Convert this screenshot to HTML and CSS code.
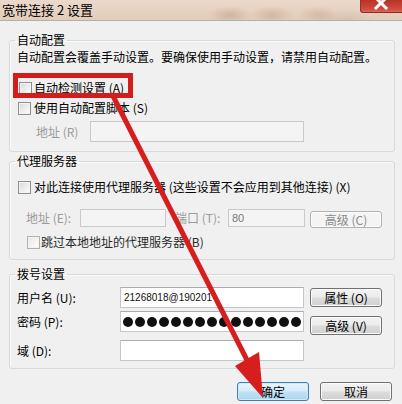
FILE: index.html
```html
<!DOCTYPE html>
<html lang="zh-CN">
<head>
<meta charset="utf-8">
<title>宽带连接 2 设置</title>
<link rel="stylesheet" href="styles.css">
</head>
<body>
<div class="window">
  <div class="titlebar">
    <span class="title">宽带连接 2 设置</span>
    <span class="close">
      <svg width="42" height="13" viewBox="0 0 42 13"><path d="M16 -2 L26 8 M26 -2 L16 8" stroke="#fff" stroke-width="3" stroke-linecap="square"/></svg>
    </span>
  </div>
  <div class="content">
    <fieldset class="group g1">
      <legend>自动配置</legend>
      <p class="desc">自动配置会覆盖手动设置。要确保使用手动设置，请禁用自动配置。</p>
      <div class="check c1"><span class="box"></span><span>自动检测设置 (A)</span></div>
      <div class="check c2"><span class="box"></span><span>使用自动配置脚本 (S)</span></div>
      <div class="row r-script">
        <span class="lbl dis lbl-script">地址 (R)</span>
        <span class="input dis in-script"></span>
      </div>
    </fieldset>

    <fieldset class="group g2">
      <legend>代理服务器</legend>
      <div class="check c3"><span class="box"></span><span>对此连接使用代理服务器 (这些设置不会应用到其他连接) (X)</span></div>
      <div class="row r-proxy">
        <span class="lbl dis lbl-addr">地址 (E):</span>
        <span class="input dis in-addr"></span>
        <span class="lbl dis lbl-port">端口 (T):</span>
        <span class="input dis in-port"><span class="val">80</span></span>
        <span class="btn btn-dis btn-c">高级 (C)</span>
      </div>
      <div class="check c4"><span class="box box-dis"></span><span>跳过本地地址的代理服务器 (B)</span></div>
    </fieldset>

    <fieldset class="group g3">
      <legend>拨号设置</legend>
      <div class="row r-dial r-user">
        <span class="lbl lbl-dial">用户名 (U):</span>
        <span class="input in-dial"><span class="val user">21268018@190201</span></span>
        <span class="btn btn-prop">属性 (O)</span>
      </div>
      <div class="row r-dial r-pass">
        <span class="lbl lbl-dial">密码 (P):</span>
        <span class="input in-dial dots">
          <i></i><i></i><i></i><i></i><i></i><i></i><i></i><i></i><i></i><i></i><i></i><i></i><i></i><i></i><i></i>
        </span>
        <span class="btn btn-adv">高级 (V)</span>
      </div>
      <div class="row r-dial r-domain">
        <span class="lbl lbl-dial">域 (D):</span>
        <span class="input in-dial"></span>
      </div>
    </fieldset>

    <div class="footer">
      <span class="btn btn-default">确定</span>
      <span class="btn">取消</span>
    </div>
  </div>

  <svg class="annot" width="402" height="404" viewBox="0 0 402 404">
    <rect x="15.5" y="75.5" width="115" height="20" fill="none" stroke="#d31c1c" stroke-width="5"/>
    <line x1="113" y1="96" x2="249" y2="364" stroke="#d61e1e" stroke-width="5" stroke-linecap="round"/>
    <polygon points="263,398 235,366 259,352" fill="#d61e1e"/>
  </svg>
</div>
</body>
</html>
```

FILE: styles.css
```css
html, body {
  margin: 0;
  padding: 0;
}

body {
  width: 402px;
  height: 404px;
  overflow: hidden;
  background: #f0f0f0;
  font-family: "Noto Sans CJK SC", "Liberation Sans", sans-serif;
  font-size: 12px;
  line-height: 16px;
  color: #111;
}

.window {
  position: relative;
  width: 402px;
  height: 404px;
  background: #f0f0f0;
}

.titlebar {
  height: 20px;
  border-bottom: 1px solid #b4b0ab;
  display: flex;
  justify-content: space-between;
  align-items: flex-start;
  background:
    radial-gradient(ellipse 22px 9px at 230px 15px, rgba(190,160,140,0.55), rgba(190,160,140,0)),
    radial-gradient(ellipse 22px 9px at 272px 15px, rgba(190,160,140,0.5), rgba(190,160,140,0)),
    radial-gradient(ellipse 20px 9px at 318px 15px, rgba(190,160,140,0.45), rgba(190,160,140,0)),
    radial-gradient(ellipse 30px 10px at 345px 20px, rgba(200,180,165,0.5), rgba(200,180,165,0)),
    linear-gradient(to bottom, #ecd9cb, #e6d1c1 60%, #e2cdbd);
}

.title {
  font-size: 13px;
  line-height: 17px;
  color: #000;
  padding: 1px 0 0 2px;
}

.close {
  display: block;
  width: 42px;
  height: 13px;
  border-bottom-left-radius: 4px;
  background: linear-gradient(to bottom, #b8322a, #cf4b3d 70%, #e07666);
  box-shadow: inset 0 -1px 0 #8d2a22, inset 1px 0 0 #9c3027;
}

.close svg {
  display: block;
}

.content {
  display: flex;
  flex-direction: column;
}

.group {
  margin: 11px 7px 0 9px;
  padding: 0 7px 9px 7px;
  border: 1px solid #d5dadd;
  border-radius: 3px;
  box-shadow: inset 1px 1px 0 #fbfbfb;
  min-width: 0;
}

.group legend {
  padding: 0 2px;
  margin-left: -2px;
  line-height: 16px;
  color: #000;
}

.g2 {
  margin-top: 1px;
  padding-bottom: 7px;
}

.g3 {
  margin-top: 6px;
  padding-bottom: 7px;
}

.desc {
  margin: 1px 0 0 0;
  line-height: 16px;
  color: #000;
  white-space: nowrap;
}

.check {
  display: flex;
  align-items: center;
  height: 20px;
  color: #000;
  white-space: nowrap;
}

.box {
  flex: none;
  width: 11px;
  height: 11px;
  border: 1px solid #8e8f8f;
  background: linear-gradient(135deg, #d9d9d9, #f7f7f7 80%);
  box-shadow: inset 0 0 0 1px #f3f3f3;
  margin: 0 3px 0 1px;
}

.box-dis {
  border-color: #aeb0b2;
  background: linear-gradient(135deg, #e6e6e6, #fafafa 80%);
}

.c1 {
  margin-top: 13px;
}

.c1 .box {
  margin-left: 2px;
  margin-right: 2px;
}

.c3 {
  margin-top: 8px;
}

.c4 {
  margin-left: 9px;
  margin-top: 4px;
  color: #2a2a2a;
}

.c4 .box {
  margin-right: 1px;
}

.row {
  display: flex;
  align-items: flex-start;
  white-space: nowrap;
}

.lbl {
  flex: none;
  color: #000;
}

.dis {
  color: #9b9b9b;
}

.input {
  flex: none;
  box-sizing: border-box;
  background: #fff;
  border: 1px solid #c3c7cc;
  border-top-color: #a9adb3;
  display: flex;
  align-items: center;
}

.input.dis {
  background: #f4f4f4;
  border-color: #c9c9c9;
}

.r-script {
  margin-top: 3px;
}

.lbl-script {
  margin-left: 19px;
  width: 54px;
  line-height: 21px;
}

.in-script {
  width: 214px;
  height: 21px;
}

.r-proxy {
  margin-top: 12px;
}

.lbl-addr {
  margin-left: 9px;
  width: 54px;
  line-height: 18px;
}

.in-addr {
  width: 86px;
  height: 18px;
}

.lbl-port {
  margin-left: 9px;
  width: 53px;
  line-height: 18px;
}

.in-port {
  width: 77px;
  height: 18px;
}

.val {
  font-family: "Liberation Sans", sans-serif;
  font-size: 11px;
  color: #333;
  padding-left: 3px;
}

.in-port .val {
  color: #7a7a7a;
}

.btn {
  flex: none;
  box-sizing: border-box;
  width: 72px;
  height: 19px;
  border: 1px solid #707070;
  border-radius: 3px;
  background: linear-gradient(to bottom, #f3f3f3, #ebebeb 48%, #dddddd 52%, #cfcfcf);
  box-shadow: inset 0 0 0 1px #fcfcfc;
  display: flex;
  align-items: center;
  justify-content: center;
  color: #000;
  line-height: 16px;
}

.btn-dis {
  border-color: #adb2b5;
  background: #f4f4f4;
  color: #8a8a8a;
}

.btn-c {
  margin-left: 5px;
  margin-top: 2px;
  height: 17px;
}

.r-dial {
  align-items: flex-start;
}

.r-user {
  margin-top: 5px;
}

.r-pass {
  margin-top: 3px;
}

.r-domain {
  margin-top: 5px;
}

.lbl-dial {
  width: 103px;
  line-height: 21px;
}

.in-dial {
  width: 184px;
  height: 21px;
}

.user {
  font-size: 10px;
  color: #111;
}

.dots {
  padding-left: 2px;
  gap: 2px;
}

.dots i {
  display: block;
  width: 10px;
  height: 10px;
  border-radius: 50%;
  background: #111;
}

.btn-prop {
  margin-left: 6px;
  margin-top: 1px;
}

.btn-adv {
  margin-left: 6px;
  margin-top: 5px;
}

.footer {
  display: flex;
  justify-content: flex-end;
  gap: 11px;
  margin-top: 13px;
  padding-right: 10px;
}

.btn-default {
  border-color: #3c7fb1;
  background: linear-gradient(to bottom, #e8f4fb, #d6ecf8 48%, #bfe1f4 52%, #a9d6ef);
  box-shadow: inset 0 0 0 1px #cfeaf8;
}

.annot {
  position: absolute;
  left: 0;
  top: 0;
  pointer-events: none;
}
```
